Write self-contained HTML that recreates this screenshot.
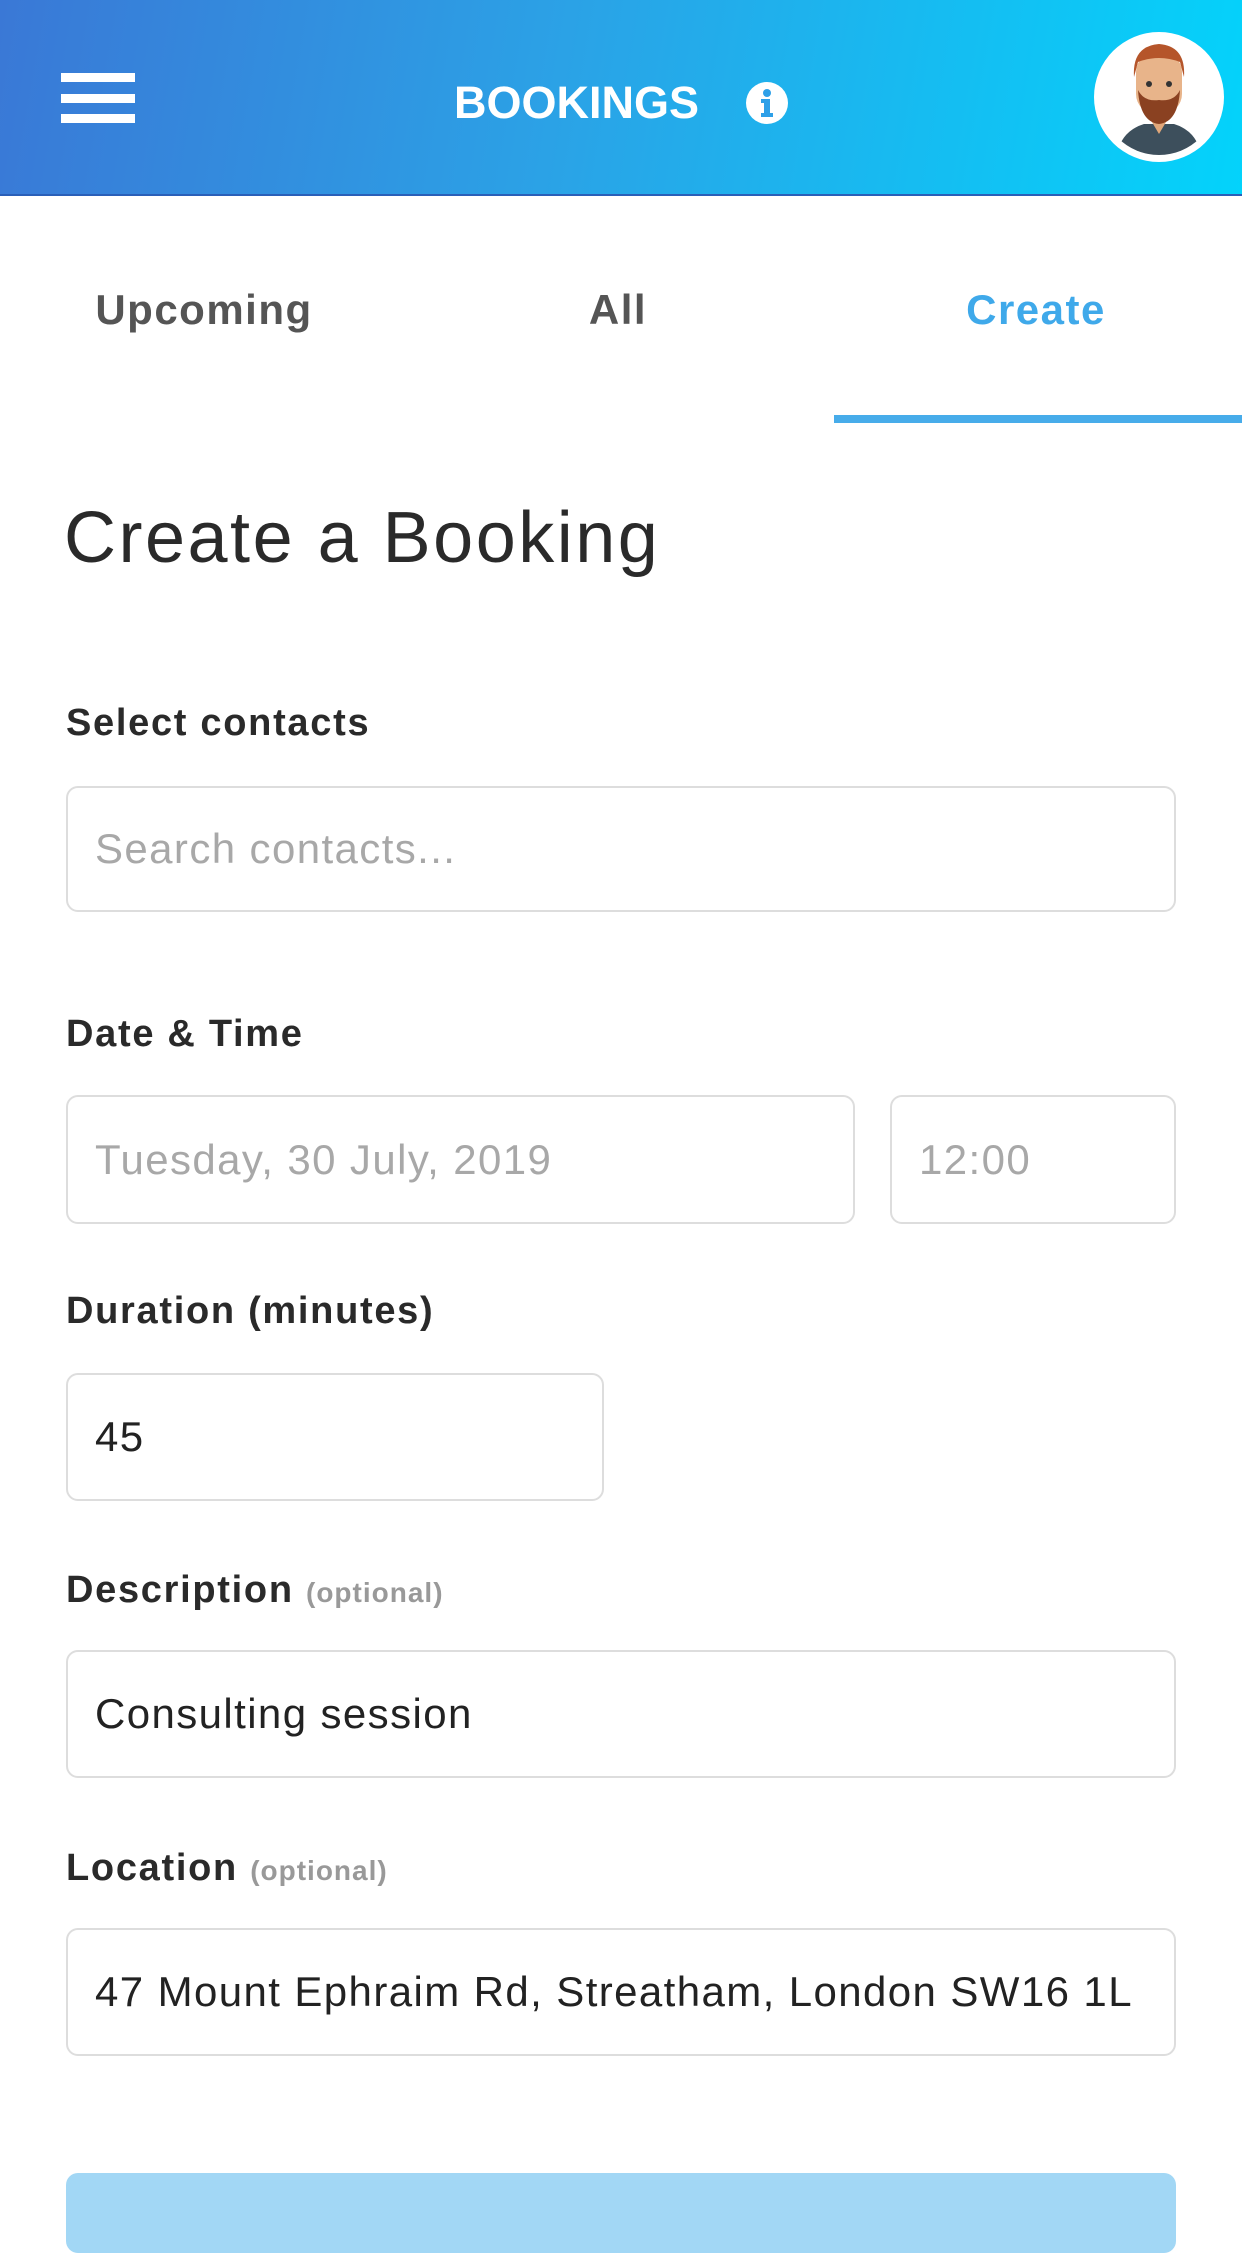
<!DOCTYPE html>
<html><head><meta charset="utf-8"><style>
*{margin:0;padding:0;box-sizing:border-box}
body{width:1242px;height:2208px;overflow:hidden;background:#fff;font-family:"Liberation Sans",sans-serif;position:relative}
.hdr{position:absolute;left:0;top:0;width:1242px;height:196px;background:linear-gradient(100deg,#3a78d6 0%,#2ba2e6 45%,#03d3fb 100%);border-bottom:2px solid #2a5fb8}
.bar{position:absolute;left:61px;width:74px;height:9px;background:#fff}
.abs{position:absolute}
.tab{position:absolute;top:280px;font-size:42px;font-weight:bold;color:#555;transform:translateX(-50%);line-height:60px;letter-spacing:1.5px}
.lbl{position:absolute;left:66px;font-size:38px;font-weight:bold;color:#2a2a2a;line-height:40px;letter-spacing:1.7px}
.lbl span{font-size:28px;color:#999;font-weight:bold;letter-spacing:1px}
.inp{position:absolute;border:2px solid #ddd;border-radius:12px;font-size:42px;letter-spacing:1.4px;color:#222;padding-left:27px;display:flex;align-items:center;white-space:nowrap;overflow:hidden}
.ph{color:#a8a8a8}
</style></head><body>
<div class="hdr">
<div class="bar" style="top:73px"></div>
<div class="bar" style="top:94px"></div>
<div class="bar" style="top:114px"></div>
<div class="abs" style="left:454px;top:76px;font-size:45px;font-weight:bold;color:#fff;line-height:54px">BOOKINGS</div>
<svg class="abs" style="left:746px;top:82px" width="42" height="42" viewBox="0 0 42 42"><circle cx="21" cy="21" r="21" fill="#fff"/><circle cx="21" cy="11" r="4" fill="#2ea0e8"/><path d="M15 17h9v14h3v4H15v-4h3V21h-3z" fill="#2ea0e8"/></svg>
<svg class="abs" style="left:1094px;top:32px" width="130" height="130" viewBox="0 0 130 130">
<circle cx="65" cy="65" r="65" fill="#fff"/>
<clipPath id="c"><circle cx="65" cy="65" r="58"/></clipPath>
<g clip-path="url(#c)">
<path d="M22 130 Q24 100 50 92 L80 92 Q106 100 108 130z" fill="#3d4f5c"/>
<path d="M55 85 L65 102 L75 85z" fill="#e0a77a"/>
<rect x="42" y="20" width="46" height="62" rx="20" fill="#e8b48a"/>
<path d="M40 45 Q38 14 65 12 Q92 14 90 45 L86 30 Q65 22 44 30z" fill="#b5552a"/>
<path d="M44 58 Q46 90 65 92 Q84 90 86 58 Q80 70 65 68 Q50 70 44 58z" fill="#8a4121"/>
<circle cx="55" cy="52" r="3" fill="#333"/><circle cx="75" cy="52" r="3" fill="#333"/>
</g></svg>
</div>
<div class="tab" style="left:204px">Upcoming</div>
<div class="tab" style="left:618px">All</div>
<div class="tab" style="left:1036px;color:#3fa9ea">Create</div>
<div class="abs" style="left:834px;top:415px;width:408px;height:8px;background:#47acea"></div>
<div class="abs" style="left:64px;top:493px;font-size:72px;letter-spacing:2.5px;color:#2a2a2a;line-height:90px">Create a Booking</div>
<div class="lbl" style="top:703px">Select contacts</div>
<div class="inp" style="left:66px;top:786px;width:1110px;height:126px"><span class="ph">Search contacts...</span></div>
<div class="lbl" style="top:1014px">Date &amp; Time</div>
<div class="inp" style="left:66px;top:1095px;width:789px;height:129px"><span class="ph">Tuesday, 30 July, 2019</span></div>
<div class="inp" style="left:890px;top:1095px;width:286px;height:129px"><span class="ph">12:00</span></div>
<div class="lbl" style="top:1291px">Duration (minutes)</div>
<div class="inp" style="left:66px;top:1373px;width:538px;height:128px">45</div>
<div class="lbl" style="top:1570px">Description <span>(optional)</span></div>
<div class="inp" style="left:66px;top:1650px;width:1110px;height:128px">Consulting session</div>
<div class="lbl" style="top:1848px">Location <span>(optional)</span></div>
<div class="inp" style="left:66px;top:1928px;width:1110px;height:128px">47 Mount Ephraim Rd, Streatham, London SW16 1L</div>
<div class="abs" style="left:66px;top:2173px;width:1110px;height:80px;background:#a2d7f5;border-radius:12px"></div>
</body></html>
